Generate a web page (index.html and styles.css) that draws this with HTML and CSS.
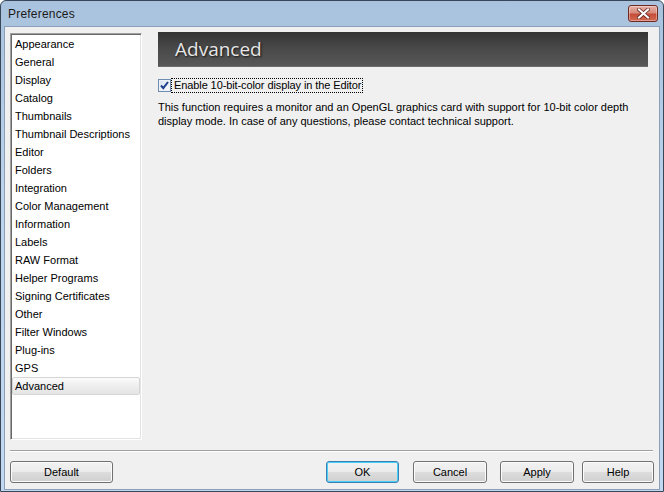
FILE: index.html
```html
<!DOCTYPE html>
<html lang="en">

<head>
    <meta charset="UTF-8">
    <title>Preferences</title>
    <link rel="stylesheet" href="styles.css">
</head>

<body>
    <div class="window">
        <div class="titlebar">
            <span class="title">Preferences</span>
            <button class="close-btn" aria-label="Close">
                <svg width="13" height="11" viewBox="0 0 13 11">
                    <path d="M2 1.5 L11 9.5 M11 1.5 L2 9.5" stroke="#5a1f17" stroke-width="3.6" stroke-linecap="square" />
                    <path d="M2 1.5 L11 9.5 M11 1.5 L2 9.5" stroke="#ffffff" stroke-width="2.2" stroke-linecap="square" />
                </svg>
            </button>
        </div>

        <div class="client">
            <div class="main">
                <ul class="listbox">
                    <li>Appearance</li>
                    <li>General</li>
                    <li>Display</li>
                    <li>Catalog</li>
                    <li>Thumbnails</li>
                    <li>Thumbnail Descriptions</li>
                    <li>Editor</li>
                    <li>Folders</li>
                    <li>Integration</li>
                    <li>Color Management</li>
                    <li>Information</li>
                    <li>Labels</li>
                    <li>RAW Format</li>
                    <li>Helper Programs</li>
                    <li>Signing Certificates</li>
                    <li>Other</li>
                    <li>Filter Windows</li>
                    <li>Plug-ins</li>
                    <li>GPS</li>
                    <li class="selected">Advanced</li>
                </ul>

                <div class="panel">
                    <div class="panel-header">Advanced</div>

                    <label class="check-row">
                        <span class="checkbox">
                            <svg width="9" height="9" viewBox="0 0 9 9">
                                <path d="M1 4.5 L3.3 7.2 L8 1" fill="none" stroke="#1e3f8e" stroke-width="2" />
                            </svg>
                        </span>
                        <span class="check-label">Enable 10-bit-color display in the Editor</span>
                    </label>

                    <p class="description">This function requires a monitor and an OpenGL graphics card with support for 10-bit color depth display mode. In case of any questions, please contact technical support.</p>
                </div>
            </div>

            <div class="separator"></div>

            <div class="button-row">
                <button class="btn btn-default">Default</button>
                <div class="button-group">
                    <button class="btn btn-ok">OK</button>
                    <button class="btn btn-cancel">Cancel</button>
                    <button class="btn btn-apply">Apply</button>
                    <button class="btn btn-help">Help</button>
                </div>
            </div>
        </div>
    </div>
</body>

</html>
```

FILE: styles.css
```css
* {
    box-sizing: border-box;
}

body {
    margin: 0;
    font-family: 'Liberation Sans', Arial, sans-serif;
    font-size: 11px;
    color: #000;
    background: #fff;
}

.window {
    width: 664px;
    height: 492px;
    display: flex;
    flex-direction: column;
    border: 1px solid #38465a;
    border-radius: 6px 6px 0 0;
    background: linear-gradient(to bottom, #a9c2dd, #bcd3ea 40%, #c3d8ee);
    overflow: hidden;
}

.titlebar {
    height: 25px;
    display: flex;
    align-items: flex-start;
    justify-content: space-between;
    padding: 0 5px 0 7px;
    flex-shrink: 0;
}

.title {
    font-size: 12px;
    letter-spacing: 0.2px;
    color: #1a1a1a;
    line-height: 26px;
}

.close-btn {
    margin-top: 4px;
    width: 30px;
    height: 17px;
    padding: 0;
    border: 1px solid #6e2a22;
    border-radius: 3px;
    background: linear-gradient(to bottom, #e6b1a6, #d88b7c 45%, #c54d39 55%, #d26a52);
    box-shadow: inset 0 0 0 1px rgba(255, 255, 255, 0.35);
    display: flex;
    align-items: center;
    justify-content: center;
}

.client {
    flex: 1;
    margin: 0 3px 3px 3px;
    border: 1px solid #8aa0ba;
    background-color: #f0f0f0;
    padding: 6px 5px 6px 5px;
    display: flex;
    flex-direction: column;
}

.main {
    display: flex;
    gap: 16px;
    height: 407px;
}

.listbox {
    width: 132px;
    height: 407px;
    margin: 0;
    padding: 1px 2px;
    list-style: none;
    background: #fff;
    border: 1px solid;
    border-color: #a0a0a0 #ffffff #ffffff #a0a0a0;
    box-shadow: inset 1px 1px 0 #696969, inset -1px -1px 0 #e3e3e3;
}

.listbox li {
    height: 18px;
    line-height: 18px;
    padding-left: 2px;
    white-space: nowrap;
    color: #000;
}

.listbox li.selected {
    margin: 0 -1px;
    border: 1px solid #d6d6d6;
    border-radius: 2px;
    line-height: 16px;
    padding-left: 2px;
    background: linear-gradient(to bottom, #fbfbfb, #eeeeee 50%, #e4e4e4);
}

.panel {
    width: 490px;
    margin-top: -1px;
}

.panel-header {
    height: 35px;
    line-height: 35px;
    padding-left: 17px;
    font-family: 'Open Sans', 'Liberation Sans', sans-serif;
    font-size: 19px;
    color: #e6e6e6;
    text-shadow: 1px 1px 2px #111;
    background: linear-gradient(to bottom, #343434, #4a4a4a 50%, #575757);
    border-bottom: 1px solid #6d6d6d;
}

.check-row {
    display: flex;
    align-items: center;
    margin-top: 11px;
    height: 15px;
}

.checkbox {
    width: 13px;
    height: 13px;
    border: 1px solid #6f8db0;
    background: linear-gradient(to bottom right, #d6e2ef, #fbfbfb);
    box-shadow: inset 0 0 0 1px #eef3f9;
    display: flex;
    align-items: center;
    justify-content: center;
}

.check-label {
    margin-left: 1px;
    padding: 0 1px 0 2px;
    line-height: 13px;
    letter-spacing: -0.1px;
    outline: 1px dotted #000;
}

.description {
    margin: 7px 0 0 0;
    line-height: 14px;
}

.separator {
    margin-top: 10px;
    margin-right: 1px;
    height: 2px;
    border-top: 1px solid #a0a0a0;
    border-bottom: 1px solid #ffffff;
}

.button-row {
    display: flex;
    justify-content: space-between;
    margin-top: 9px;
}

.button-group {
    display: flex;
}

.btn {
    height: 22px;
    padding: 0;
    font-family: 'Liberation Sans', Arial, sans-serif;
    font-size: 11px;
    color: #000;
    border: 1px solid #707070;
    border-radius: 3px;
    background: linear-gradient(to bottom, #f2f2f2, #ebebeb 50%, #dddddd 51%, #cfcfcf);
    box-shadow: inset 0 0 0 1px #fcfcfc;
}

.btn-default {
    width: 103px;
}

.btn-ok {
    width: 73px;
    border-color: #3c7fb1;
    box-shadow: inset 0 0 0 1px #48d0f6;
}

.btn-cancel {
    width: 74px;
    margin-left: 14px;
}

.btn-apply {
    width: 74px;
    margin-left: 13px;
}

.btn-help {
    width: 72px;
    margin-left: 8px;
}
```
